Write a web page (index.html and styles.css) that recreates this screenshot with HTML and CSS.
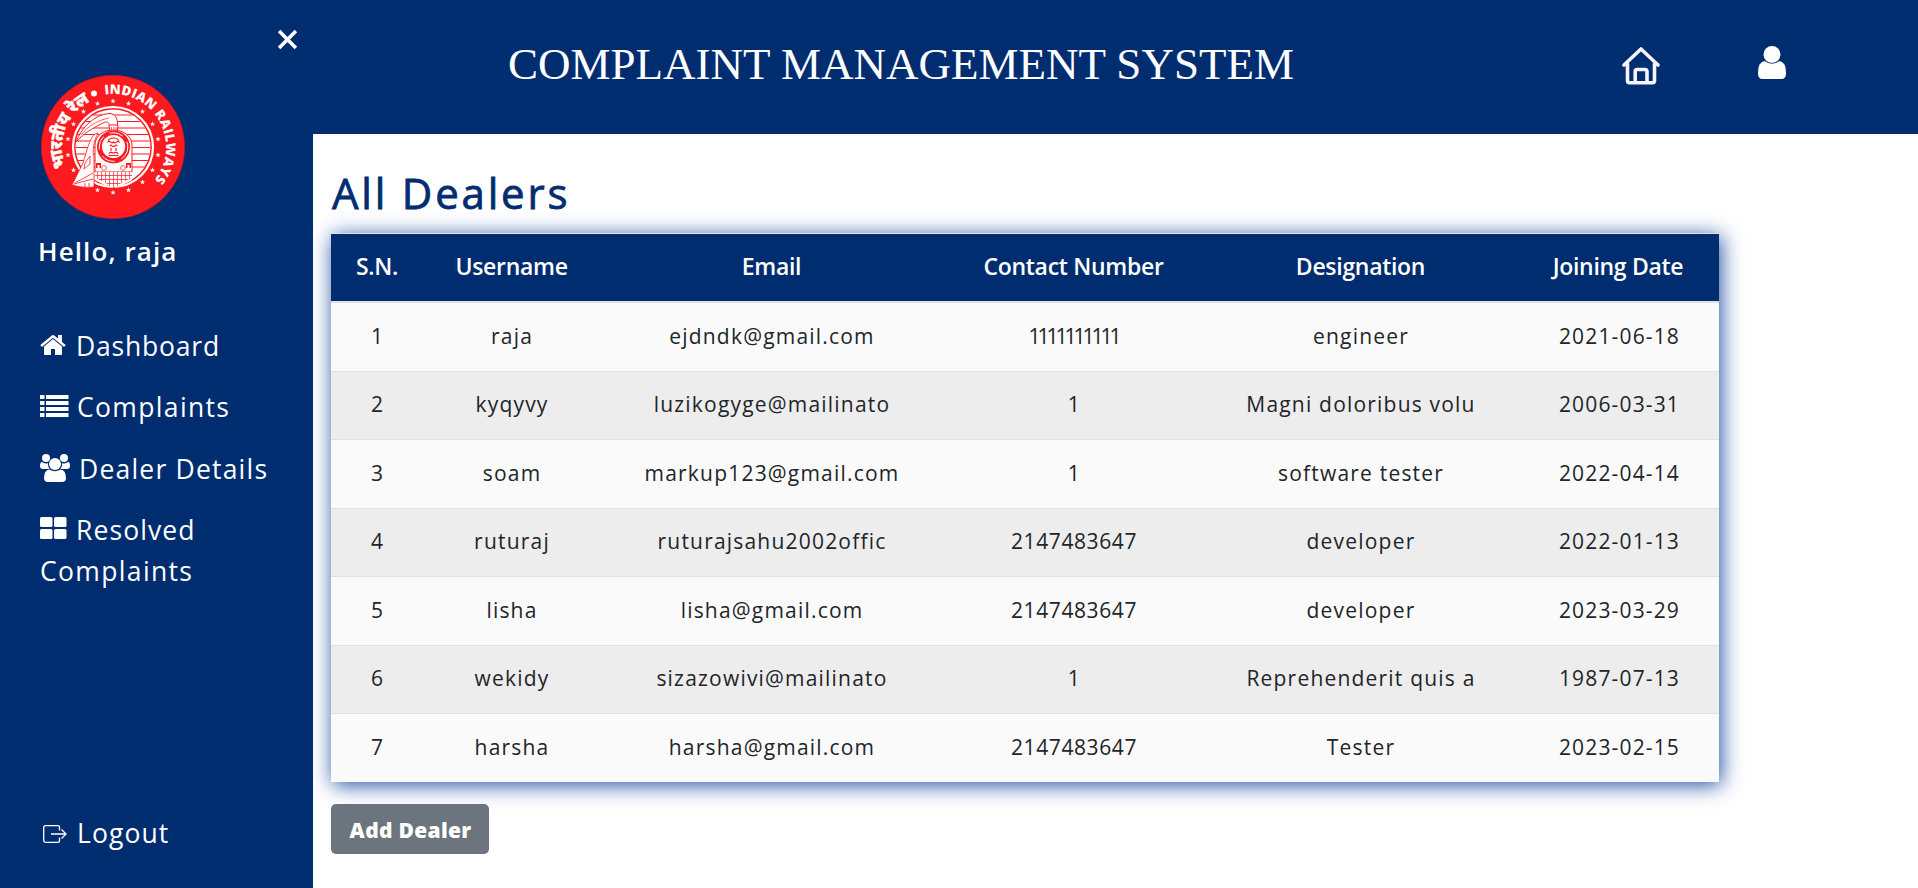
FILE: index.html
```html
<!DOCTYPE html>
<html lang="en">
<head>
<meta charset="utf-8">
<title>Complaint Management System</title>
<link rel="stylesheet" href="styles.css">
</head>
<body>
<div class="app">
  <aside class="sidebar">
    <div class="close-row">
      <svg class="close" viewBox="0 0 20 20"><path d="M2 2 18 18M18 2 2 18" fill="none" stroke="#fff" stroke-width="3.4"/></svg>
    </div>
    <svg class="logo" viewBox="0 0 144 144">
      <defs>
        <path id="arc-en" d="M19 72A53 53 0 0 1 125 72A53 53 0 0 1 19 72"/>
        <path id="arc-hi" d="M72 123A51 51 0 0 1 72 21"/>
        <path id="star" d="M0-2.700.7-.8 2.600-.8 1.100.4 1.600 2.300 0 1.200-1.600 2.300-1.100.4-2.600-.8-.7-.8Z"/>
        <clipPath id="disc"><circle cx="72" cy="72" r="37.500"/></clipPath>
        <pattern id="grid" width="4" height="4" patternUnits="userSpaceOnUse"><path d="M0 0H4M0 0V4" stroke="#ff1a20" stroke-width="1.300"/></pattern>
      </defs>
      <circle cx="72" cy="72" r="71.700" fill="#ff1a20" stroke="#c5101f" stroke-width=".6"/>
      <g fill="#fff">
        <use href="#star" transform="translate(72 26)"/><use href="#star" transform="translate(87.500 28.500)"/>
        <use href="#star" transform="translate(101.500 36.500)"/><use href="#star" transform="translate(111.500 49)"/>
        <use href="#star" transform="translate(117 64)"/><use href="#star" transform="translate(117 80)"/>
        <use href="#star" transform="translate(111.500 95)"/><use href="#star" transform="translate(101.500 107)"/>
        <use href="#star" transform="translate(87.500 115)"/><use href="#star" transform="translate(72 117.500)"/>
        <use href="#star" transform="translate(56.500 115)"/><use href="#star" transform="translate(32.500 95)"/>
        <use href="#star" transform="translate(27 80)"/><use href="#star" transform="translate(27 64)"/>
        <use href="#star" transform="translate(32.500 49)"/><use href="#star" transform="translate(42.500 36.500)"/>
        <use href="#star" transform="translate(56.500 28.500)"/>
        <circle cx="53" cy="18.500" r="3"/>
      </g>
      <circle cx="72" cy="72" r="40" fill="none" stroke="#fff" stroke-width="2.200"/>
      <circle cx="72" cy="72" r="37.500" fill="#fff"/>
      <g clip-path="url(#disc)">
        <path d="M30 40H114M30 46.500H114M30 53H114M30 59.500H114M30 66H114M30 72.500H114M30 79H114M30 85.500H114M30 92H114" stroke="#ff1a20" stroke-width="1.100"/>
      </g>
      <path d="M35 67C41 52 53 40 68 38.500C74 38.500 77 43 76.500 51H68.500C68 47 66 46 62 48C52 53 43 58 35 67Z" fill="#fff" stroke="#ff1a20" stroke-width="1"/>
      <path d="M40 60C48 50 58 45 68 43" fill="none" stroke="#ff1a20" stroke-width=".7"/>
      <path d="M68 50H77L76 60H69Z" fill="#fff" stroke="#ff1a20"/>
      <path d="M70.500 52V59M73 52V59M75 52V59" stroke="#ff1a20" stroke-width=".7"/>
      <path d="M54 70C54 61 62 55 72 55S91 61 91 70V97H54Z" fill="#fff" stroke="#ff1a20" stroke-width="1"/>
      <circle cx="72.500" cy="72" r="16.500" fill="#ff1a20"/>
      <circle cx="72.500" cy="72" r="14.300" fill="none" stroke="#fff" stroke-width="1" stroke-dasharray="14 7"/>
      <circle cx="72.500" cy="71.500" r="11.600" fill="#fff"/>
      <g fill="none" stroke="#ff1a20" stroke-width="1.200">
        <path d="M67.500 66C68 62 77 62 77.500 66M66.500 67.500C69 64 70 70 72.500 67C75 70 76 64 78.500 67.500M69 71C70 68 71 73 72.500 71C74 73 75 68 76 71M70 73V76M75 73V76M68 79C69 76 71 78 72.500 78S76 76 77 79M67.500 80.500H77.500"/>
      </g>
      <path d="M64 87Q72.500 91 81 87" fill="none" stroke="#fff" stroke-width="1.200" stroke-dasharray="1 .6"/>
      <path d="M55 88H60V93H55ZM85 88H90V93H85Z" fill="#ff1a20"/><path d="M56.500 90H58.500V93H56.500ZM86.500 90H88.500V93H86.500Z" fill="#fff"/>
      <circle cx="63" cy="93" r="2.400" fill="#fff" stroke="#ff1a20" stroke-width=".7"/><circle cx="82" cy="93" r="2.400" fill="#fff" stroke="#ff1a20" stroke-width=".7"/>
      <path d="M54 97H91V104L73 113L54 104Z" fill="#fff"/><path d="M54 97H91V104L73 113L54 104Z" fill="url(#grid)"/>
      <path d="M54 104L66 110M91 104L79 110" stroke="#fff" stroke-width="2"/>
      <path d="M54 59C48 64 46 76 42 88L31 110C38 112 46 113 53 112V82C51 77 53 65 57 58Z" fill="#fff" stroke="#ff1a20" stroke-width=".8"/>
      <path d="M44 88L49 81V89L43 94ZM34 108L52 98M33 109L52 104M44 108V112M48 108V112" fill="none" stroke="#ff1a20" stroke-width=".8"/>
      <text class="logo-text"><textPath href="#arc-en" startOffset="75" textLength="127">INDIAN RAILWAYS</textPath></text>
      <text class="logo-text hindi"><textPath href="#arc-hi" startOffset="59" textLength="77">भारतीय रेल</textPath></text>
    </svg>
    <div class="hello">Hello, raja</div>
    <nav class="nav">
      <a class="item dash"><svg class="i-home" viewBox="90 253 1612 1283"><path fill="#fff" d="M1472 992v480q0 26-19 45t-45 19h-384v-384h-256v384h-384q-26 0-45-19t-19-45v-480q0-1 .5-3t.5-3l575-474 575 474q1 2 1 6zm223-69l-62 74q-8 9-21 11h-3q-13 0-21-7l-692-577-692 577q-12 8-24 7-13-2-21-11l-62-74q-8-10-7-23.500t11-21.500l719-599q32-26 76-26t76 26l244 204v-195q0-14 9-23t23-9h192q14 0 23 9t9 23v408l219 182q10 8 11 21.500t-7 23.500z"/></svg><span>Dashboard</span></a>
      <a class="item comp"><svg class="i-list" viewBox="0 0 29 22"><path fill="#fff" d="M0 0H4.500V4H0ZM6 0H28.500V4H6ZM0 6H4.500V10H0ZM6 6H28.500V10H6ZM0 12H4.500V16H0ZM6 12H28.500V16H6ZM0 18H4.500V22H0ZM6 18H28.500V22H6Z"/></svg><span>Complaints</span></a>
      <a class="item deal"><svg class="i-users" viewBox="0 0 30 28"><g fill="#fff"><circle cx="6" cy="4" r="4"/><circle cx="24" cy="4" r="4"/><circle cx="15" cy="10" r="6"/><path d="M2 8Q6 10.500 8 9Q7.500 12.500 9.500 15H3Q0 15 0 12Q0 8 2 8ZM28 8Q24 10.500 22 9Q22.500 12.500 20.500 15H27Q30 15 30 12Q30 8 28 8ZM9.500 15.500Q15 19 20.500 15.500Q26 16 26 24Q26 28 22 28H8Q4 28 4 24Q4 16 9.500 15.500Z"/></g></svg><span>Dealer Details</span></a>
      <a class="item reso"><svg class="i-grid" viewBox="0 0 27 22"><g fill="#fff"><rect width="12.500" height="10" rx="1.500"/><rect x="14" width="12.500" height="10" rx="1.500"/><rect y="12" width="12.500" height="10" rx="1.500"/><rect x="14" y="12" width="12.500" height="10" rx="1.500"/></g></svg><span>Resolved</span></a>
      <a class="item comp"><span>Complaints</span></a>
    </nav>
    <a class="item logout"><svg class="i-out" viewBox="0 0 24 18"><path d="M16.500 5.500V2Q16.500.7 15 .7H2.500Q.7.700.7 2.500V15.500Q.7 17.300 2.500 17.300H15Q16.500 17.300 16.500 16V12.500M8 9H23M18.500 4.500 23 9 18.500 13.500" fill="none" stroke="#fff" stroke-width="1.300"/></svg><span>Logout</span></a>
  </aside>
  <main class="main">
    <header class="topbar">
      <h1 class="title">COMPLAINT MANAGEMENT SYSTEM</h1>
      <svg class="t-home" viewBox="0 0 38 38"><path d="M2 18 19 2 36 18M5.500 17V33.500Q5.500 35.700 7.500 35.700H30.500Q32.500 35.700 32.500 33.500V17M13.200 35V24.500Q13.200 22.500 15 22.500H23Q25 22.500 25 24.500V35" fill="none" stroke="#f6f5ff" stroke-width="3.600" stroke-linejoin="round" stroke-linecap="round"/></svg>
      <svg class="t-user" viewBox="0 0 28 33"><circle cx="14" cy="8.500" r="8.500" fill="#fff"/><path d="M6.500 15Q14 20.500 21.500 15Q28 16 28 27Q28 33 23.500 33H4.500Q0 33 0 27Q0 16 6.500 15Z" fill="#fff"/></svg>
    </header>
    <section class="content">
      <h2 class="heading">All Dealers</h2>
      <table class="dealers">
        <colgroup><col class="c1"><col class="c2"><col class="c3"><col class="c4"><col class="c5"><col class="c6"></colgroup>
        <thead><tr><th>S.N.</th><th>Username</th><th>Email</th><th>Contact Number</th><th>Designation</th><th>Joining Date</th></tr></thead>
        <tbody>
          <tr><td>1</td><td>raja</td><td>ejdndk@gmail.com</td><td class="phone ones">1111111111</td><td>engineer</td><td class="date">2021-06-18</td></tr>
          <tr><td>2</td><td>kyqyvy</td><td>luzikogyge@mailinato</td><td class="phone">1</td><td>Magni doloribus volu</td><td class="date">2006-03-31</td></tr>
          <tr><td>3</td><td>soam</td><td>markup123@gmail.com</td><td class="phone">1</td><td>software tester</td><td class="date">2022-04-14</td></tr>
          <tr><td>4</td><td>ruturaj</td><td>ruturajsahu2002offic</td><td class="phone">2147483647</td><td>developer</td><td class="date">2022-01-13</td></tr>
          <tr><td>5</td><td>lisha</td><td>lisha@gmail.com</td><td class="phone">2147483647</td><td>developer</td><td class="date">2023-03-29</td></tr>
          <tr><td>6</td><td>wekidy</td><td>sizazowivi@mailinato</td><td class="phone">1</td><td>Reprehenderit quis a</td><td class="date">1987-07-13</td></tr>
          <tr><td>7</td><td>harsha</td><td>harsha@gmail.com</td><td class="phone">2147483647</td><td>Tester</td><td class="date">2023-02-15</td></tr>
        </tbody>
      </table>
      <button class="add">Add Dealer</button>
    </section>
  </main>
</div>
</body>
</html>
```
FILE: styles.css
```css
* { box-sizing: border-box; }
body { margin: 0; background: #fff; color: #212529; font-family: "Open Sans", "Noto Sans", sans-serif; overflow: hidden; }
svg { display: block; flex: none; }
.app { display: grid; grid-template-columns: 313px 1fr; height: 888px; }
.sidebar { background: #002d70; color: #fff; display: flex; flex-direction: column; position: relative; z-index: 1; }
.close-row { height: 75px; display: flex; justify-content: flex-end; padding: 29px 15px 0 0; }
.close { width: 21px; height: 21px; }
.logo { width: 144px; height: 144px; margin-left: 41px; }
.logo-text { font: 800 13.2px "Open Sans", sans-serif; fill: #fff; }
.hindi { font: 800 17px "Noto Sans", sans-serif; stroke: #fff; stroke-width: .5px; }
.hello { height: 36px; line-height: 36px; margin: 14px 0 1px 38px; font-size: 26px; font-weight: 600; letter-spacing: 1.1px; white-space: nowrap; }
.nav { margin-top: 55px; padding-left: 40px; }
.item { display: flex; align-items: center; height: 41px; font-size: 26.5px; letter-spacing: 1.1px; white-space: nowrap; }
.item span { line-height: 41px; padding-top: 1px; }
.dash { letter-spacing: .8px; }
.comp { letter-spacing: 1.35px; }
.dash, .comp { margin-bottom: 20.500px; }
.deal { margin-bottom: 20px; letter-spacing: 1.2px; }
.i-home { width: 26px; height: 20px; margin: -2px 10px 0 0; }
.i-list { width: 29px; height: 22px; margin: -2px 8px 0 0; }
.i-users { width: 30px; height: 28px; margin: -1px 9px 0 0; }
.i-grid { width: 27px; height: 22px; margin: -3px 9px 0 0; }
.logout { margin: auto 0 34px 43px; }
.logout span { padding-top: 0; }
.i-out { width: 24px; height: 18px; margin-right: 10px; }
.main { display: flex; flex-direction: column; min-width: 0; }
.topbar { height: 134px; background: #002d70; display: flex; align-items: flex-start; padding: 34px 0 0 195px; }
.title { margin: 0; width: 790px; font: 400 45px/61px "Liberation Serif", serif; color: #fff; white-space: nowrap; }
.t-home { width: 38px; height: 38px; margin: 13px 98px 0 324px; }
.t-user { width: 28px; height: 33px; margin-top: 12px; }
.content { padding: 30px 0 0 18px; }
.heading { margin: 0 0 11px; height: 58px; padding-left: 1px; line-height: 58px; font-size: 42px; font-weight: 400; color: #002d70; letter-spacing: 2.8px; -webkit-text-stroke: .8px #002d70; }
.dealers { width: 1388px; table-layout: fixed; border-collapse: separate; border-spacing: 0; text-align: center; box-shadow: 2px 3px 20px #1f4f9f; background: #fafafa; }
.c1 { width: 92px; } .c2 { width: 177px; } .c3 { width: 343px; } .c4 { width: 261px; } .c5 { width: 313px; } .c6 { width: 202px; }
th { height: 70px; padding: 0 0 4px; background: #002d70; background-clip: padding-box; color: #fff; font-size: 23px; font-weight: 600; letter-spacing: -.3px; border-top: 1px solid #dee2e6; border-bottom: 2px solid #dee2e6; }
td { height: 69px; padding: 0 0 2px 1px; font-size: 21px; font-weight: 400; letter-spacing: 1.2px; border-top: 1px solid #dee2e6; }
tbody tr:first-child td { height: 68px; border-top: 0; }
tbody tr:nth-child(even) { background: #ededed; }
tbody tr:nth-child(even) td { height: 68px; padding-bottom: 3px; }
.date { letter-spacing: 1.15px; padding-left: 3px; }
.phone { letter-spacing: .6px; }
.ones { letter-spacing: -3px; padding-left: 0; }
.add { display: block; margin: 22px 0 0; width: 158px; height: 50px; padding: 2px 0 0 1px; border: 0; border-radius: 5px; background: #6c757d; color: #fff; font: 800 21px "Open Sans", sans-serif; letter-spacing: .3px; }
```
